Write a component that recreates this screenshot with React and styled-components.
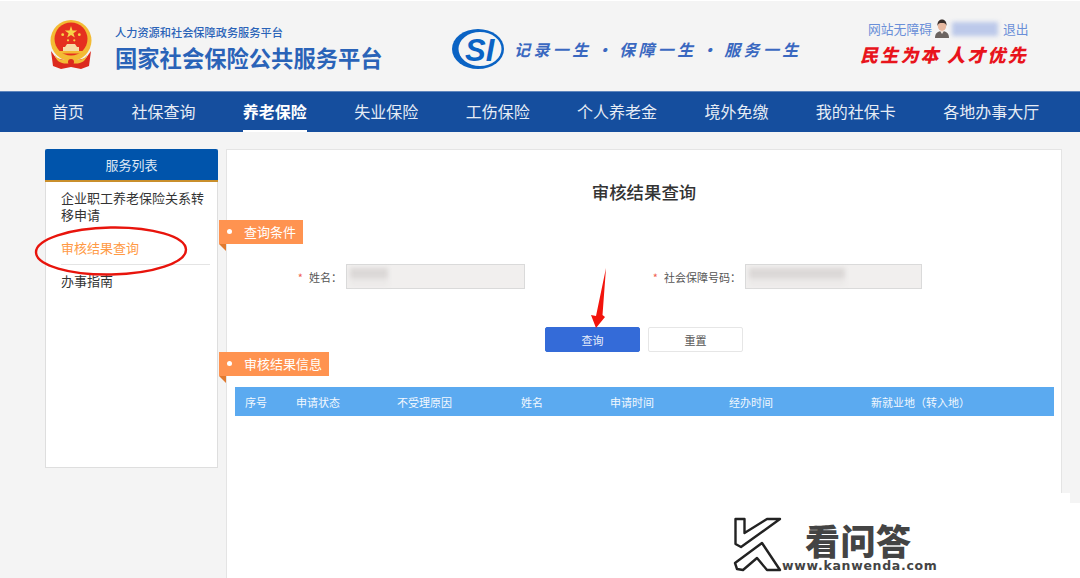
import React from "react";
import styled, { createGlobalStyle } from "styled-components";

const CJK = `"Noto Sans CJK SC", "Liberation Sans", sans-serif`;

const navItems = ["首页", "社保查询", "养老保险", "失业保险", "工伤保险", "个人养老金", "境外免缴", "我的社保卡", "各地办事大厅"];
const columns = ["序号", "申请状态", "不受理原因", "姓名", "申请时间", "经办时间", "新就业地（转入地）"];

const Emblem = () => (
  <svg width="44" height="51" viewBox="0 0 44 51">
    <circle cx="22" cy="20.5" r="20.5" fill="#f3bb34" />
    <circle cx="22" cy="19" r="16.5" fill="#e5301f" />
    <polygon points="22,6 23.5,10.4 28.2,10.4 24.4,13.2 25.8,17.6 22,14.9 18.2,17.6 19.6,13.2 15.8,10.4 20.5,10.4" fill="#f7d348" />
    <circle cx="13.7" cy="14.7" r="1.4" fill="#f7d348" />
    <circle cx="30.3" cy="14.7" r="1.4" fill="#f7d348" />
    <circle cx="19" cy="20.3" r="1.1" fill="#f7d348" />
    <circle cx="25.3" cy="20.3" r="1.1" fill="#f7d348" />
    <path d="M18 24h8l2 3h-12z" fill="#f6dca6" />
    <rect x="14" y="27" width="16" height="4" fill="#f6dca6" />
    <rect x="9" y="31" width="26" height="2.5" fill="#f3bb34" />
    <path d="M2 31l2 15 8 3 10-2 10 2 8-3 2-15-5 7-8 2-7 0-7 0-8-2z" fill="#dc2a1d" />
    <path d="M6 35c3 5 9 6 16 4 7 2 13 1 16-4-1 7-8 10-16 8-8 2-15-1-16-8z" fill="#f3bb34" />
    <circle cx="22" cy="42" r="3" fill="#dc2a1d" />
  </svg>
);

const SiLogo = () => (
  <svg width="52" height="40" viewBox="0 0 52 40">
    <ellipse cx="26" cy="20" rx="26" ry="20" fill="#0a63c4" />
    <ellipse cx="28" cy="20" rx="21.5" ry="17" fill="#f4f4f4" />
    <text x="13" y="32" fontFamily="Liberation Sans, sans-serif" fontSize="31" fontWeight="700" fontStyle="italic" fill="#0a63c4">SI</text>
  </svg>
);

const Avatar = () => (
  <svg width="16" height="19" viewBox="0 0 16 19">
    <path d="M1 19c0-5 3-7 7-7s7 2 7 7z" fill="#6b6460" />
    <path d="M6 12l2 3 2-3z" fill="#f0e3da" />
    <ellipse cx="8" cy="7" rx="4.2" ry="5" fill="#e8b9a0" />
    <path d="M3.5 7C3 2 6 0.5 8 0.5S13 2 12.5 7C12 4.5 10.5 4 8 4S4 4.5 3.5 7z" fill="#3a2f2b" />
  </svg>
);

const KMark = () => (
  <svg width="50" height="56" viewBox="8 12 50 56">
    <path d="M10.5 14h9v14L42 14h13L16 42l-5.5-3z" fill="#fff" stroke="#222" strokeWidth="2.4" strokeLinejoin="round" />
    <path d="M10 58l27-20 18 27H42L32 53 18 65l-6-1z" fill="#fff" stroke="#222" strokeWidth="2.4" strokeLinejoin="round" />
  </svg>
);

const App = () => (
  <Page>
    <GlobalStyle />
    <Header>
      <Brand>
        <Emblem />
        <BrandText>
          <BrandSub>人力资源和社会保障政务服务平台</BrandSub>
          <BrandTitle>国家社会保险公共服务平台</BrandTitle>
        </BrandText>
      </Brand>
      <Motto>
        <SiLogo />
        <MottoText>记录一生 · 保障一生 · 服务一生</MottoText>
      </Motto>
      <Account>
        <UserRow>
          网站无障碍
          <Avatar />
          <BlurName />
          <span>退出</span>
        </UserRow>
        <Slogan>民生为本 人才优先</Slogan>
      </Account>
    </Header>

    <Nav>
      {navItems.map((item) => (
        <NavItem key={item} $active={item === "养老保险"}>{item}</NavItem>
      ))}
    </Nav>

    <Content>
      <Sidebar>
        <SideHead>服务列表</SideHead>
        <SideList>
          <SideLink>企业职工养老保险关系转移申请</SideLink>
          <SideLink $active>审核结果查询</SideLink>
          <SideLink>办事指南</SideLink>
        </SideList>
      </Sidebar>

      <Main>
        <Title>审核结果查询</Title>
        <Tag $width="84px" $top="16px">查询条件</Tag>
        <FormRow>
          <Field $width="415px" $label="107px" $input="179px">
            <Label>姓名：</Label>
            <Input><Smudge $width="38px" /></Input>
          </Field>
          <Field $label="91px" $input="177px">
            <Label>社会保障号码：</Label>
            <Input><Smudge $width="96px" /></Input>
          </Field>
        </FormRow>
        <Buttons>
          <Button $primary>查询</Button>
          <Button>重置</Button>
        </Buttons>
        <Tag $width="110px">审核结果信息</Tag>
        <TableHead>
          {columns.map((col) => (
            <span key={col}>{col}</span>
          ))}
        </TableHead>
      </Main>
    </Content>

    <Circle viewBox="0 0 156 76" width="156" height="76">
      <ellipse cx="78" cy="38" rx="75" ry="23.5" fill="none" stroke="#e8140c" strokeWidth="2.4" transform="rotate(-1 78 38)" />
    </Circle>
    <Arrow viewBox="0 0 20 60" width="20" height="60">
      <path d="M16 0L12.5 47 15 49 6 60 1 47 6 48z" fill="#f2140c" />
    </Arrow>

    <Patch>
      <KMark />
      <Mark>
        <MarkName>看问答</MarkName>
        <MarkUrl>www.kanwenda.com</MarkUrl>
      </Mark>
    </Patch>
  </Page>
);

const GlobalStyle = createGlobalStyle`
  html, body {
    margin: 0;
    padding: 0;
    background: #f4f4f4;
  }
  * {
    box-sizing: border-box;
  }
`;

const Page = styled.div`
  position: relative;
  width: 1080px;
  height: 578px;
  overflow: hidden;
  background: #f4f4f4;
  font-family: ${CJK};
  text-spacing-trim: space-all;
`;

const Header = styled.header`
  height: 91px;
  border-top: 1px solid #fff;
  padding: 19px 0 0 49px;
  display: flex;
  align-items: flex-start;
`;

const Brand = styled.div`
  display: flex;
  gap: 22px;
  width: 403px;
`;

const BrandText = styled.div`
  padding-top: 5px;
  color: #2a63b8;
`;

const BrandSub = styled.div`
  font-size: 11.2px;
  font-weight: 500;
  line-height: 15px;
`;

const BrandTitle = styled.div`
  font-size: 22.3px;
  font-weight: 700;
  line-height: 30px;
  margin-top: 2px;
  white-space: nowrap;
`;

const Motto = styled.div`
  display: flex;
  align-items: center;
  gap: 10px;
  width: 408px;
  padding-top: 9px;
`;

const MottoText = styled.div`
  color: #3a68c0;
  font-size: 16px;
  font-style: italic;
  font-weight: 700;
  letter-spacing: 3.4px;
  white-space: nowrap;
  word-spacing: -3px;
`;

const Account = styled.div`
  width: 172px;
  margin-top: -1px;
`;

const UserRow = styled.div`
  display: flex;
  align-items: center;
  gap: 2px;
  height: 19px;
  margin-left: 8px;
  font-size: 12.8px;
  color: #6a8fd8;
  white-space: nowrap;
`;

const BlurName = styled.div`
  width: 46px;
  height: 14px;
  margin-right: 3px;
  background: #bcc9ea;
  filter: blur(2px);
`;

const Slogan = styled.div`
  margin-top: 3px;
  color: #e8141c;
  font-size: 18px;
  font-weight: 900;
  font-style: italic;
  letter-spacing: 2.2px;
  white-space: nowrap;
`;

const Nav = styled.nav`
  height: 41px;
  padding-left: 52px;
  display: flex;
  gap: 47.4px;
  background: #154e9e;
  border-top: 1px solid #5f86bd;
`;

const NavItem = styled.a`
  display: block;
  height: 40px;
  line-height: 39px;
  font-size: 16px;
  white-space: nowrap;
  color: ${(p) => (p.$active ? "#fff" : "#e6ecf5")};
  font-weight: ${(p) => (p.$active ? 700 : 400)};
  border-bottom: 2px solid ${(p) => (p.$active ? "#fff" : "transparent")};
`;

const Content = styled.div`
  display: flex;
  align-items: flex-start;
  gap: 8px;
  padding: 17px 18px 0 45px;
`;

const Sidebar = styled.aside`
  width: 173px;
  height: 319px;
  flex: none;
  background: #fff;
  border: 1px solid #dedede;
  border-top: none;
`;

const SideHead = styled.div`
  height: 33px;
  margin: 0 -1px;
  background: #0054ab;
  border-bottom: 2px solid #c98f2c;
  border-radius: 2px 2px 0 0;
  color: #dfe8f4;
  font-size: 13px;
  line-height: 32px;
  text-align: center;
`;

const SideList = styled.ul`
  list-style: none;
  margin: -1px 0 0;
  padding: 0 7px 0 15px;
`;

const SideLink = styled.li`
  font-size: 13px;
  line-height: 17px;
  padding: 8px 0;
  color: ${(p) => (p.$active ? "#ff9a45" : "#333")};
  border-bottom: ${(p) => (p.$active ? "1px solid #e4e4e4" : "none")};

  &:last-child {
    padding-top: 7px;
  }
`;

const Main = styled.main`
  flex: 1;
  height: 440px;
  background: #fff;
  border: 1px solid #e4e4e4;
  padding: 29px 7px 0 8px;
`;

const Title = styled.h1`
  margin: 0;
  padding-right: 1px;
  font-size: 17.4px;
  font-weight: 500;
  line-height: 25px;
  color: #333;
  text-align: center;
`;

const Tag = styled.div`
  position: relative;
  width: ${(p) => p.$width};
  height: 24px;
  margin: ${(p) => p.$top || "0"} 0 0 -16px;
  padding-left: 25px;
  background: #ff9350;
  color: #fff;
  font-size: 13px;
  line-height: 23px;

  &::before {
    content: "";
    position: absolute;
    left: 8px;
    top: 9px;
    width: 5px;
    height: 5px;
    border-radius: 50%;
    background: #fff;
  }

  &::after {
    content: "";
    position: absolute;
    left: 0;
    top: 24px;
    border-top: 7px solid #e07a30;
    border-left: 7px solid transparent;
  }
`;

const FormRow = styled.div`
  display: flex;
  margin-top: 20px;
`;

const Field = styled.div`
  display: grid;
  grid-template-columns: ${(p) => p.$label} ${(p) => p.$input};
  column-gap: 4px;
  align-items: center;
  width: ${(p) => p.$width || "auto"};
`;

const Label = styled.label`
  justify-self: end;
  font-size: 11px;
  color: #555;
  white-space: nowrap;

  &::before {
    content: "*";
    color: #f0604f;
    margin-right: 6px;
  }
`;

const Input = styled.div`
  height: 25px;
  background: #f1efee;
  border: 1px solid #dadada;
  padding: 3px 0 0 3px;
`;

const Smudge = styled.div`
  width: ${(p) => p.$width};
  height: 18px;
  background: linear-gradient(#dbd8d7 55%, #ebe9e8 60%);
  filter: blur(2px);
`;

const Buttons = styled.div`
  display: flex;
  gap: 8px;
  margin: 38px 0 0 310px;
`;

const Button = styled.button`
  width: 95px;
  height: 25px;
  padding: 0;
  font-family: inherit;
  font-size: 11px;
  border-radius: 2px;
  color: ${(p) => (p.$primary ? "#e8eefb" : "#555")};
  background: ${(p) => (p.$primary ? "#346bd8" : "#fff")};
  border: 1px solid ${(p) => (p.$primary ? "#346bd8" : "#e6e6e6")};
`;

const TableHead = styled.div`
  display: grid;
  grid-template-columns: 51px 101px 124px 89px 119px 142px 1fr;
  align-items: center;
  height: 29px;
  margin-top: 11px;
  padding-left: 10px;
  background: #5baaf0;
  color: #f2f8fe;
  font-size: 11px;
`;

const Circle = styled.svg`
  position: absolute;
  left: 33px;
  top: 213px;
`;

const Arrow = styled.svg`
  position: absolute;
  left: 590px;
  top: 268px;
`;

const Patch = styled.div`
  position: absolute;
  left: 723px;
  right: 0;
  bottom: 0;
  height: 75px;
  padding: 14px 0 0 10px;
  background: #fff;
  display: flex;

  &::before {
    content: "";
    position: absolute;
    right: 10px;
    top: -10px;
    width: 9px;
    height: 10px;
    background: #fff;
  }
`;

const Mark = styled.div`
  margin: 3px 0 0 -1px;
`;

const MarkName = styled.div`
  margin-left: 23px;
  font-size: 35px;
  font-weight: 900;
  line-height: 40px;
  color: #444;
  letter-spacing: 0.5px;
`;

const MarkUrl = styled.div`
  font-family: "DejaVu Sans", sans-serif;
  font-size: 12.5px;
  font-weight: 700;
  line-height: 12px;
  color: #444;
  letter-spacing: 0.7px;
  white-space: nowrap;
`;

export default App;
